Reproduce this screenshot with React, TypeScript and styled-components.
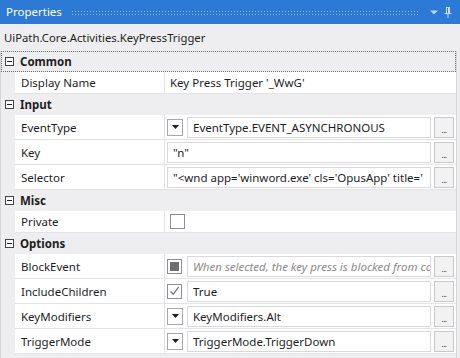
import React from "react";
import styled, { createGlobalStyle } from "styled-components";

const Global = createGlobalStyle`
  html, body { margin: 0; padding: 0; background: #eeeef0; }
  body { font-family: "Segoe UI", "Noto Sans", "Open Sans", sans-serif; font-size: 11.5px; color: #1e1e1e; }
  * { box-sizing: border-box; }
`;

const Panel = styled.div`
  width: 460px;
  height: 358px;
  display: flex;
  flex-direction: column;
  background: #eeeef0;
  overflow: hidden;
`;

const TitleBar = styled.div`
  height: 24px;
  flex: none;
  background: #2d7ad6;
  display: flex;
  align-items: center;
  padding: 0 8px 0 6px;
  color: #fff;
`;

const Title = styled.span`
  font-size: 11.5px;
  line-height: 24px;
`;

const Grip = styled.div`
  flex: 1;
  height: 6px;
  margin: 1px 10px 0 9px;
  background-image: radial-gradient(circle, rgba(170, 200, 240, 0.85) 0.7px, transparent 0.9px);
  background-size: 3px 3px;
`;

const TitleIcons = styled.div`
  display: flex;
  align-items: center;
  gap: 6px;
`;

const SubTitle = styled.div`
  height: 27px;
  flex: none;
  padding-left: 4px;
  display: flex;
  align-items: center;
  font-size: 11.3px;
`;

const Grid = styled.div`
  width: 457px;
  border-left: 1px solid #d4d4d8;
  border-right: 1px solid #d4d4d8;
  display: flex;
  flex-direction: column;
  flex: 1;
`;

const CategoryHeader = styled.div<{ $focused?: boolean }>`
  height: 21px;
  display: flex;
  align-items: center;
  padding-left: 4px;
  font-weight: 700;
  font-size: 11.5px;
  outline: ${(p) => (p.$focused ? "1px dotted #6b6b6b" : "none")};
  outline-offset: -1px;
`;

const Toggle = styled.span`
  width: 9px;
  height: 9px;
  border: 1px solid #444;
  background: #fff;
  margin-right: 6px;
  position: relative;
  flex: none;
  &::after {
    content: "";
    position: absolute;
    left: 1px;
    right: 1px;
    top: 3px;
    height: 1px;
    background: #222;
  }
`;

const Row = styled.div<{ $h: number }>`
  height: ${(p) => p.$h}px;
  display: grid;
  grid-template-columns: 14px 150px 1fr;
`;

const Gutter = styled.div``;

const NameCell = styled.div`
  background: #fff;
  border-bottom: 1px solid #e4e4e6;
  border-right: 1px solid #e4e4e6;
  padding-left: 6px;
  display: flex;
  align-items: center;
  white-space: nowrap;
  overflow: hidden;
`;

const ValueCell = styled.div`
  background: #fff;
  border-bottom: 1px solid #e4e4e6;
  display: flex;
  align-items: center;
  padding: 0 2px 0 2px;
  gap: 3px;
  min-width: 0;
`;

const PlainValue = styled.span`
  padding-left: 3px;
  white-space: nowrap;
`;

const TextBox = styled.div<{ $placeholder?: boolean }>`
  flex: 1;
  min-width: 0;
  height: 21px;
  border: 1px solid #d9d9dc;
  background: #fff;
  display: flex;
  align-items: center;
  padding-left: 5px;
  white-space: nowrap;
  overflow: hidden;
  font-style: ${(p) => (p.$placeholder ? "italic" : "normal")};
  color: ${(p) => (p.$placeholder ? "#8a8a8a" : "#1e1e1e")};
`;

const EllipsisButton = styled.div`
  width: 20px;
  height: 21px;
  flex: none;
  border: 1px solid #c9c9cc;
  background: #f2f2f3;
  display: flex;
  align-items: flex-end;
  justify-content: center;
  padding-bottom: 3px;
  font-size: 8px;
  line-height: 8px;
  color: #333;
  letter-spacing: -0.5px;
  overflow: hidden;
`;

const DropButton = styled.div`
  width: 16px;
  height: 17px;
  flex: none;
  border: 1px solid #a8a8ac;
  background: #fff;
  display: flex;
  align-items: center;
  justify-content: center;
  margin-right: 1px;
`;

const CheckBox = styled.div<{ $indent?: boolean }>`
  width: 15px;
  height: 15px;
  flex: none;
  border: 1px solid #8f8f93;
  background: #fff;
  display: flex;
  align-items: center;
  justify-content: center;
  margin-right: 2px;
  margin-left: ${(p) => (p.$indent ? "3px" : "0")};
`;

const Indeterminate = styled.div`
  width: 9px;
  height: 9px;
  background: #6e6e72;
`;

const Arrow = () => (
  <svg width="7" height="4" viewBox="0 0 7 4">
    <path d="M0 0 H7 L3.5 4 Z" fill="#1e1e1e" />
  </svg>
);

const Check = () => (
  <svg width="11" height="10" viewBox="0 0 11 10">
    <path d="M1.5 5.5 L4.3 8.3 L9.5 1.2" fill="none" stroke="#707074" strokeWidth="1.3" />
  </svg>
);

type Editor =
  | { kind: "plain"; text: string }
  | { kind: "text"; text: string }
  | { kind: "drop"; text: string }
  | { kind: "check"; checked: boolean; text: string; placeholder?: boolean }
  | { kind: "checkOnly" };

type Prop = { name: string; editor: Editor };
type Category = { name: string; props: Prop[]; focused?: boolean };

const data: Category[] = [
  {
    name: "Common",
    focused: true,
    props: [{ name: "Display Name", editor: { kind: "plain", text: "Key Press Trigger '_WwG'" } }],
  },
  {
    name: "Input",
    props: [
      { name: "EventType", editor: { kind: "drop", text: "EventType.EVENT_ASYNCHRONOUS" } },
      { name: "Key", editor: { kind: "text", text: "\"n\"" } },
      {
        name: "Selector",
        editor: { kind: "text", text: "\"<wnd app='winword.exe' cls='OpusApp' title='" },
      },
    ],
  },
  {
    name: "Misc",
    props: [{ name: "Private", editor: { kind: "checkOnly" } }],
  },
  {
    name: "Options",
    props: [
      {
        name: "BlockEvent",
        editor: {
          kind: "check",
          checked: false,
          placeholder: true,
          text: "When selected, the key press is blocked from continuing to the application",
        },
      },
      { name: "IncludeChildren", editor: { kind: "check", checked: true, text: "True" } },
      { name: "KeyModifiers", editor: { kind: "drop", text: "KeyModifiers.Alt" } },
      { name: "TriggerMode", editor: { kind: "drop", text: "TriggerMode.TriggerDown" } },
    ],
  },
];

const renderEditor = (e: Editor) => {
  switch (e.kind) {
    case "plain":
      return <PlainValue>{e.text}</PlainValue>;
    case "checkOnly":
      return <CheckBox $indent />;
    case "text":
      return (
        <>
          <TextBox>{e.text}</TextBox>
          <EllipsisButton>...</EllipsisButton>
        </>
      );
    case "drop":
      return (
        <>
          <DropButton>
            <Arrow />
          </DropButton>
          <TextBox>{e.text}</TextBox>
          <EllipsisButton>...</EllipsisButton>
        </>
      );
    case "check":
      return (
        <>
          <CheckBox>{e.checked ? <Check /> : <Indeterminate />}</CheckBox>
          <TextBox $placeholder={e.placeholder}>{e.text}</TextBox>
          <EllipsisButton>...</EllipsisButton>
        </>
      );
  }
};

const heightOf = (e: Editor) => (e.kind === "plain" || e.kind === "checkOnly" ? 22 : 25);

export default function App() {
  return (
    <>
      <Global />
      <Panel>
        <TitleBar>
          <Title>Properties</Title>
          <Grip />
          <TitleIcons>
            <svg width="8" height="5" viewBox="0 0 8 5">
              <path d="M0 0.5 H8 L4 4.5 Z" fill="#b9d3f3" />
            </svg>
            <svg width="8" height="11" viewBox="0 0 8 11">
              <path
                d="M2 0.5 H6 M2.5 0.5 V6 M5.5 0.5 V6 M0.5 6.5 H7.5 M4 6.5 V11"
                stroke="#cfe0f6"
                strokeWidth="1"
                fill="none"
              />
              <rect x="4" y="1" width="1.5" height="5" fill="#cfe0f6" />
            </svg>
          </TitleIcons>
        </TitleBar>
        <SubTitle>UiPath.Core.Activities.KeyPressTrigger</SubTitle>
        <Grid>
          {data.map((cat) => (
            <React.Fragment key={cat.name}>
              <CategoryHeader $focused={cat.focused}>
                <Toggle />
                {cat.name}
              </CategoryHeader>
              {cat.props.map((p) => (
                <Row key={p.name} $h={heightOf(p.editor)}>
                  <Gutter />
                  <NameCell>{p.name}</NameCell>
                  <ValueCell>{renderEditor(p.editor)}</ValueCell>
                </Row>
              ))}
            </React.Fragment>
          ))}
        </Grid>
      </Panel>
    </>
  );
}
